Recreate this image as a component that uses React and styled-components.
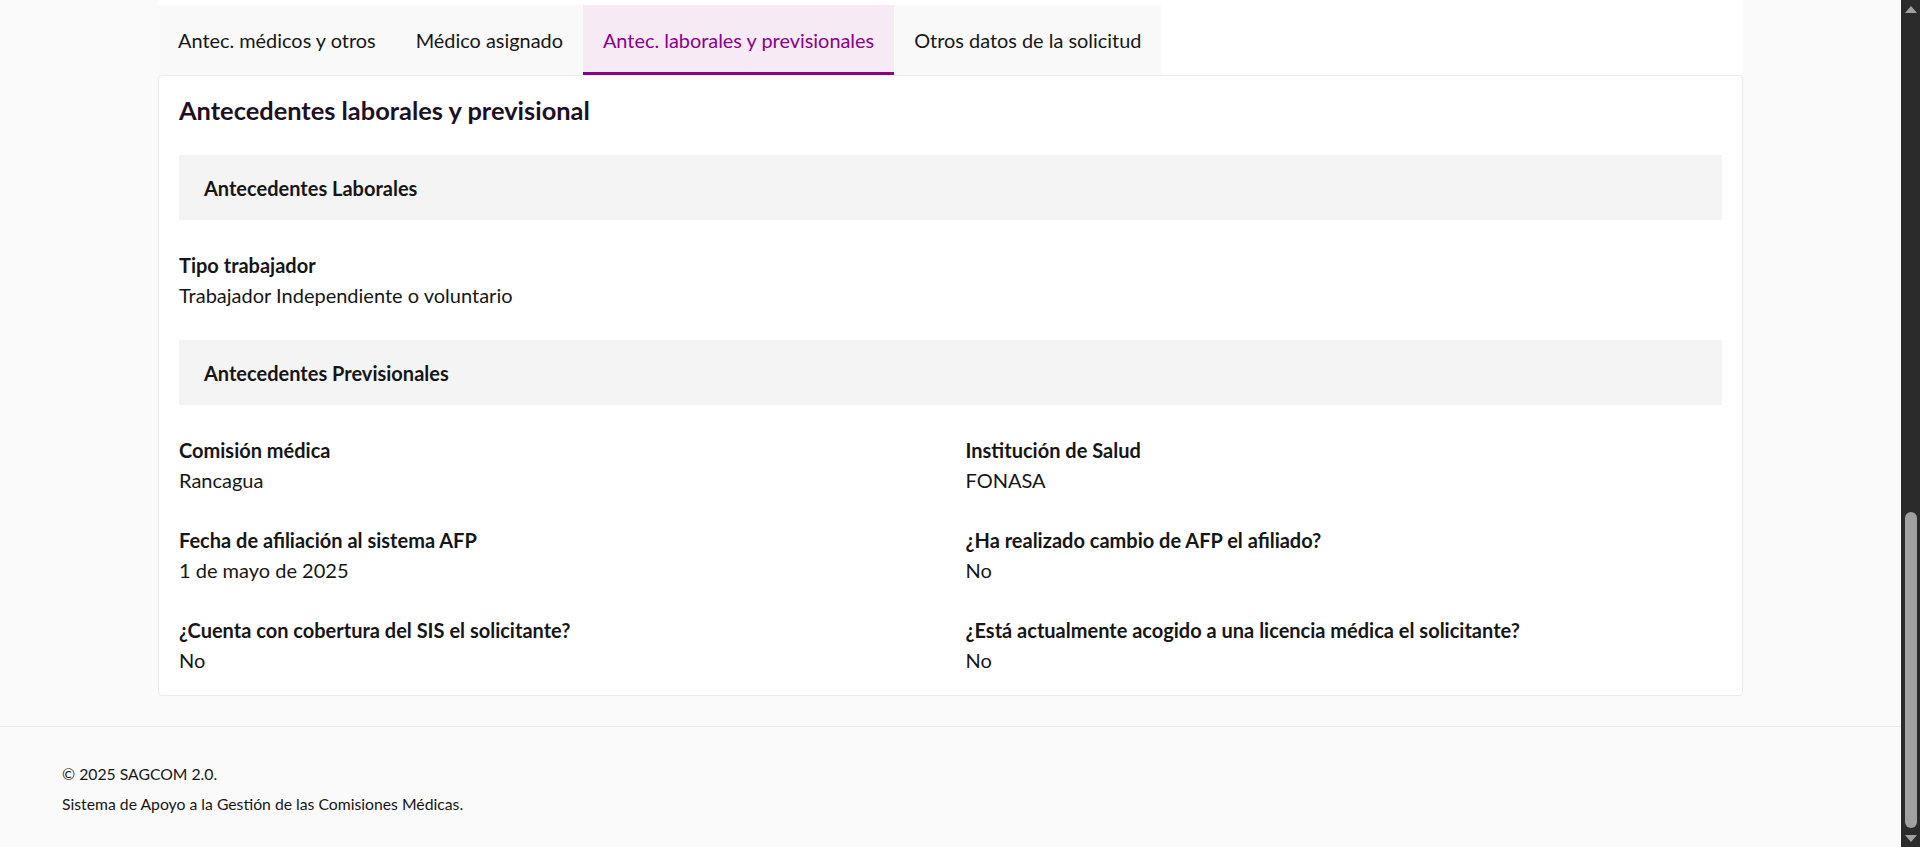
import React from "react";
import styled, { createGlobalStyle } from "styled-components";

const GlobalStyle = createGlobalStyle`
  html, body {
    margin: 0;
    padding: 0;
    background: #fafafa;
    font-family: Lato, "Noto Sans", "Liberation Sans", sans-serif;
    color: #1a1a1a;
    overflow: hidden;
  }
  * { box-sizing: border-box; }
`;

const Viewport = styled.div`
  display: flex;
  height: 847px;
  width: 1920px;
`;

const Main = styled.div`
  flex: 1;
  display: flex;
  flex-direction: column;
  min-width: 0;
`;

const Container = styled.div`
  width: 1585px;
  margin: 0 auto;
  display: flex;
  flex-direction: column;
`;

const TopRemnant = styled.div`
  height: 5px;
  background: #ffffff;
`;

const TabBar = styled.div`
  display: flex;
  background: #ffffff;
  height: 70px;
`;

const Tab = styled.button`
  appearance: none;
  border: none;
  margin: 0;
  font-family: inherit;
  font-size: 19.9px;
  padding: 3px 20px 0;
  height: 70px;
  display: flex;
  align-items: center;
  cursor: pointer;
  background: ${(p) => (p.$active ? "#f6eaf5" : "#f9f9f9")};
  color: ${(p) => (p.$active ? "#8b008b" : "#161616")};
  border-bottom: 3px solid ${(p) => (p.$active ? "#8b008b" : "transparent")};
`;

const Card = styled.section`
  background: #ffffff;
  border: 1px solid #ececec;
  border-radius: 4px;
  padding: 20px;
  display: flex;
  flex-direction: column;
  gap: 30px;
`;

const Heading = styled.h2`
  margin: 0;
  font-size: 25.4px;
  line-height: 29px;
  font-weight: 700;
  color: #1c1024;
`;

const Band = styled.div`
  height: 65px;
  background: #f4f4f4;
  display: flex;
  align-items: center;
  padding: 0 25px;
  font-size: 20px;
  font-weight: 700;
  color: #161616;
`;

const FieldGrid = styled.div`
  display: grid;
  grid-template-columns: ${(p) => (p.$cols === 2 ? "1fr 1fr" : "1fr")};
  column-gap: 30px;
  row-gap: 30px;
`;

const Field = styled.div`
  display: flex;
  flex-direction: column;
`;

const Label = styled.div`
  font-size: 20px;
  line-height: 30px;
  font-weight: 700;
  color: #161616;
`;

const Value = styled.div`
  font-size: 20px;
  line-height: 30px;
  font-weight: 400;
  color: #161616;
`;

const Footer = styled.footer`
  margin-top: 30px;
  border-top: 1px solid #e8e8e8;
  padding: 32px 62px 0;
  flex: 1;
`;

const FooterLine = styled.p`
  margin: 0;
  font-size: 15.75px;
  line-height: 30px;
  color: #161616;
`;

const Scrollbar = styled.div`
  width: 19px;
  background: #2b2b2b;
  display: flex;
  flex-direction: column;
  align-items: center;
  padding: 6px 0 5px;
`;

const ScrollArrow = styled.div`
  width: 0;
  height: 0;
  border-left: 6px solid transparent;
  border-right: 6px solid transparent;
  ${(p) =>
    p.$down
      ? "border-top: 7px solid #a0a0a0;"
      : "border-bottom: 7px solid #a0a0a0;"}
`;

const ScrollTrack = styled.div`
  flex: 1;
  width: 100%;
  display: flex;
  flex-direction: column;
  justify-content: flex-end;
  align-items: center;
  padding: 0 0 7px;
`;

const ScrollThumb = styled.div`
  width: 12px;
  height: 316px;
  background: #a0a0a0;
  border-radius: 6px;
`;

const tabs = [
  "Antec. médicos y otros",
  "Médico asignado",
  "Antec. laborales y previsionales",
  "Otros datos de la solicitud",
];

const previsionales = [
  ["Comisión médica", "Rancagua"],
  ["Institución de Salud", "FONASA"],
  ["Fecha de afiliación al sistema AFP", "1 de mayo de 2025"],
  ["¿Ha realizado cambio de AFP el afiliado?", "No"],
  ["¿Cuenta con cobertura del SIS el solicitante?", "No"],
  ["¿Está actualmente acogido a una licencia médica el solicitante?", "No"],
];

export default function App() {
  return (
    <>
      <GlobalStyle />
      <Viewport>
        <Main>
          <Container>
            <TopRemnant />
            <TabBar>
              {tabs.map((t, i) => (
                <Tab key={t} $active={i === 2}>
                  {t}
                </Tab>
              ))}
            </TabBar>
            <Card>
              <Heading>Antecedentes laborales y previsional</Heading>
              <Band>Antecedentes Laborales</Band>
              <FieldGrid $cols={1}>
                <Field>
                  <Label>Tipo trabajador</Label>
                  <Value>Trabajador Independiente o voluntario</Value>
                </Field>
              </FieldGrid>
              <Band>Antecedentes Previsionales</Band>
              <FieldGrid $cols={2}>
                {previsionales.map(([l, v]) => (
                  <Field key={l}>
                    <Label>{l}</Label>
                    <Value>{v}</Value>
                  </Field>
                ))}
              </FieldGrid>
            </Card>
          </Container>
          <Footer>
            <FooterLine>© 2025 SAGCOM 2.0.</FooterLine>
            <FooterLine>Sistema de Apoyo a la Gestión de las Comisiones Médicas.</FooterLine>
          </Footer>
        </Main>
        <Scrollbar>
          <ScrollArrow />
          <ScrollTrack>
            <ScrollThumb />
          </ScrollTrack>
          <ScrollArrow $down />
        </Scrollbar>
      </Viewport>
    </>
  );
}
